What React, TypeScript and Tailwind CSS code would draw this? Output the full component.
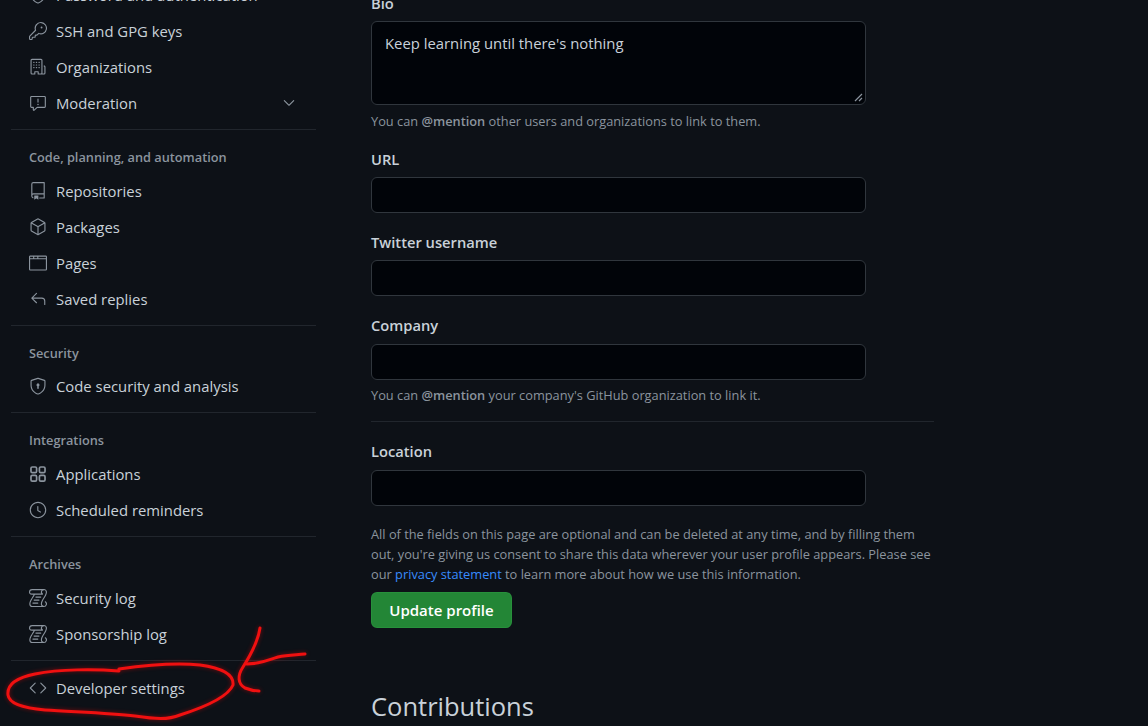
import type { ReactNode } from "react";
import {
  GoBrowser,
  GoChevronDown,
  GoClock,
  GoCode,
  GoKey,
  GoLog,
  GoOrganization,
  GoPackage,
  GoReply,
  GoReport,
  GoRepo,
  GoShieldLock,
} from "react-icons/go";

function AppsIcon() {
  return (
    <svg width="1em" height="1em" viewBox="0 0 16 16" fill="none" stroke="currentColor" strokeWidth="1.5">
      <rect x="1.75" y="1.75" width="5" height="5" rx="1.2" />
      <rect x="9.25" y="1.75" width="5" height="5" rx="1.2" />
      <rect x="1.75" y="9.25" width="5" height="5" rx="1.2" />
      <rect x="9.25" y="9.25" width="5" height="5" rx="1.2" />
    </svg>
  );
}

function NavItem({ icon, label, chevron }: { icon: ReactNode; label: string; chevron?: boolean }) {
  return (
    <div className="flex h-9 items-center pl-[18px] pr-[18px] text-[14.85px] text-[#c9d1d9]">
      <span className="flex w-[27px] shrink-0 text-[#8b949e] text-lg">{icon}</span>
      <span className="flex-1">{label}</span>
      {chevron && <GoChevronDown className="text-[#8b949e] text-lg" />}
    </div>
  );
}

function Divider({ className }: { className: string }) {
  return <div className={`h-px bg-[#21262d] ${className}`} />;
}

function Heading({ children, className }: { children: ReactNode; className: string }) {
  return <div className={`pl-[18px] text-[12.75px] leading-5 font-semibold text-[#8b949e] ${className}`}>{children}</div>;
}

function Label({ children, className }: { children: ReactNode; className: string }) {
  return <div className={`text-[14.7px] leading-5 font-semibold text-[#c9d1d9] ${className}`}>{children}</div>;
}

function Field({ className = "" }: { className?: string }) {
  return <div className={`h-9 w-[495px] rounded-md border border-[#30363d] bg-[#010409] ${className}`} />;
}

function Hint({ children, className }: { children: ReactNode; className: string }) {
  return <p className={`text-[12.8px] leading-5 text-[#8b949e] ${className}`}>{children}</p>;
}

function Sidebar() {
  return (
    <nav className="ml-[11px] w-[305px] shrink-0 -mt-[23px]">
      <NavItem icon={<GoShieldLock />} label="Password and authentication" />
      <NavItem icon={<GoKey />} label="SSH and GPG keys" />
      <NavItem icon={<GoOrganization />} label="Organizations" />
      <NavItem icon={<GoReport />} label="Moderation" chevron />
      <Divider className="mt-2" />
      <Heading className="pt-[17px] pb-[6px]">Code, planning, and automation</Heading>
      <NavItem icon={<GoRepo />} label="Repositories" />
      <NavItem icon={<GoPackage />} label="Packages" />
      <NavItem icon={<GoBrowser />} label="Pages" />
      <NavItem icon={<GoReply />} label="Saved replies" />
      <Divider className="mt-2" />
      <Heading className="pt-[17px] pb-[5px]">Security</Heading>
      <NavItem icon={<GoShieldLock />} label="Code security and analysis" />
      <Divider className="mt-2" />
      <Heading className="pt-[17px] pb-[6px]">Integrations</Heading>
      <NavItem icon={<AppsIcon />} label="Applications" />
      <NavItem icon={<GoClock />} label="Scheduled reminders" />
      <Divider className="mt-2" />
      <Heading className="pt-[17px] pb-[6px]">Archives</Heading>
      <NavItem icon={<GoLog />} label="Security log" />
      <NavItem icon={<GoLog />} label="Sponsorship log" />
      <Divider className="mt-2" />
      <div className="mt-[9px]">
        <NavItem icon={<GoCode />} label="Developer settings" />
      </div>
    </nav>
  );
}

function ProfileForm() {
  return (
    <main className="ml-[55px] w-[563px] shrink-0 -mt-[7px]">
      <Label className="">Bio</Label>
      <div className="relative mt-[8px] h-[84px] w-[495px] rounded-md border border-[#30363d] bg-[#010409] px-[13px] py-[11px] text-[14.85px] leading-5 text-[#c9d1d9]">
        Keep learning until there's nothing
        <svg className="absolute right-[2px] bottom-[2px]" width="9" height="9" viewBox="0 0 9 9">
          <path d="M1 8L8 1M5 8L8 5" stroke="#8b949e" strokeWidth="1.2" />
        </svg>
      </div>
      <Hint className="mt-[6px]">
        You can <strong className="font-semibold">@mention</strong> other users and organizations to link to them.
      </Hint>
      <Label className="mt-[18px]">URL</Label>
      <Field className="mt-2" />
      <Label className="mt-[19px]">Twitter username</Label>
      <Field className="mt-2" />
      <Label className="mt-[19px]">Company</Label>
      <Field className="mt-[9px]" />
      <Hint className="mt-[5px]">
        You can <strong className="font-semibold">@mention</strong> your company's GitHub organization to link it.
      </Hint>
      <div className="mt-4 h-px bg-[#21262d]" />
      <Label className="mt-[19px]">Location</Label>
      <Field className="mt-[9px]" />
      <Hint className="mt-[18px]">
        All of the fields on this page are optional and can be deleted at any time, and by filling them out, you're
        giving us consent to share this data wherever your user profile appears. Please see our{" "}
        <span className="text-[#388bfd]">privacy statement</span> to learn more about how we use this information.
      </Hint>
      <button className="mt-2 flex h-9 w-[141px] items-center justify-center rounded-md border border-[#2ea043]/40 bg-[#238636] text-[15px] font-semibold text-white">
        Update profile
      </button>
      <h2 className="mt-[58px] text-[25.5px] leading-10 font-normal text-[#c9d1d9]">Contributions</h2>
    </main>
  );
}

export default function App() {
  return (
    <div className="relative flex h-[726px] w-[1148px] overflow-hidden bg-[#0d1117] font-['Open_Sans',sans-serif]">
      <Sidebar />
      <ProfileForm />
      {/* red marker scribble on top of the screenshot */}
      <svg className="absolute inset-0 drop-shadow-[0_0_2px_rgba(255,0,0,0.45)]" width="1148" height="726" viewBox="0 0 1148 726" fill="none">
        <g stroke="#f01010" strokeWidth="3" strokeLinecap="round" strokeLinejoin="round">
          <path d="M119 671C95 669 60 669 35 674C15 678 7 686 8 695C9 703 22 708 45 710C75 712 110 713 135 716C155 719 168 720 180 715C205 707 228 697 233 685C234 675 222 668 200 665C170 662 140 666 119 669" />
          <path d="M260 628C258 642 250 656 243 667C237 676 238 684 245 688C250 690 255 691 259 691" />
          <path d="M247 664C260 664 268 660 278 657C288 655 296 655 305 654" />
        </g>
      </svg>
    </div>
  );
}
